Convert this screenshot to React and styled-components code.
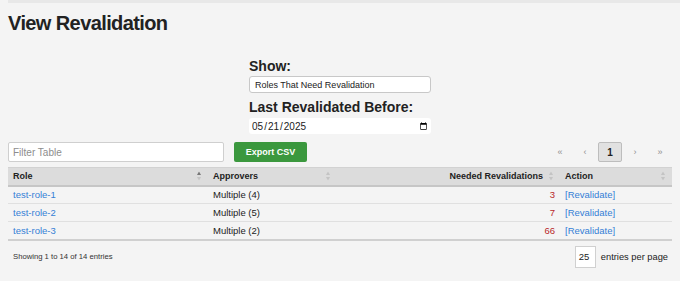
import React from "react";
import styled, { createGlobalStyle } from "styled-components";

const Global = createGlobalStyle`
  html, body { margin: 0; padding: 0; background: #f4f4f4; }
  body { font-family: "Liberation Sans", Arial, sans-serif; color: #222; }
  * { box-sizing: border-box; }
`;

const Page = styled.div`
  padding: 0 8px 20px 8px;
`;

const TopEdge = styled.div`
  height: 3px;
  margin-right: -8px;
  background: #e8e8e8;
`;

const Title = styled.h1`
  margin: 8px 0 0 0;
  font-size: 20px;
  line-height: 24px;
  font-weight: 700;
  letter-spacing: -0.6px;
  color: #222;
`;

const FormBlock = styled.div`
  width: 182px;
  margin: 23px auto 0 auto;
  display: flex;
  flex-direction: column;
`;

const Label = styled.label`
  font-size: 14px;
  line-height: 17px;
  font-weight: 700;
  color: #222;
  margin-top: ${(p) => (p.$first ? "0" : "6px")};
  margin-bottom: ${(p) => (p.$first ? "1px" : "2px")};
`;

const Select = styled.select`
  appearance: none;
  -webkit-appearance: none;
  height: 17px;
  width: 100%;
  background: #fff;
  border: 1px solid #c8c8c8;
  border-radius: 3px;
  padding: 0 0 0 5px;
  font-family: "Liberation Sans", Arial, sans-serif;
  font-size: 9px;
  color: #222;
  outline: none;
`;

const DateInput = styled.input`
  height: 16px;
  width: 100%;
  background: #fff;
  border: none;
  border-radius: 3px;
  padding: 0 3px 0 2px;
  font-family: "Liberation Sans", Arial, sans-serif;
  font-size: 10px;
  color: #222;
  outline: none;
  &::-webkit-calendar-picker-indicator {
    margin: 0;
    padding: 0;
    width: 9px;
    height: 9px;
  }
`;

const Toolbar = styled.div`
  display: flex;
  align-items: center;
  margin-top: 8px;
  height: 20px;
`;

const FilterInput = styled.input`
  width: 216px;
  height: 20px;
  background: #fff;
  border: 1px solid #cfcfcf;
  border-radius: 2px;
  padding: 0 4px;
  font-family: "Liberation Sans", Arial, sans-serif;
  font-size: 10px;
  color: #222;
  outline: none;
  &::placeholder { color: #8d8d8d; }
`;

const GreenButton = styled.button`
  margin-left: 10px;
  width: 73px;
  height: 20px;
  background: #3b983e;
  border: none;
  border-radius: 2px;
  color: #fff;
  font-family: "Liberation Sans", Arial, sans-serif;
  font-weight: 700;
  font-size: 9px;
  padding: 0;
`;

const Pager = styled.div`
  margin-left: auto;
  display: flex;
  gap: 1px;
  align-items: center;
`;

const PageGlyph = styled.span`
  width: 24px;
  height: 20px;
  display: flex;
  align-items: center;
  justify-content: center;
  font-size: 9px;
  color: #8f8f8f;
`;

const PageCurrent = styled.span`
  width: 24px;
  height: 20px;
  display: flex;
  align-items: center;
  justify-content: center;
  background: #e1e1e1;
  border: 1px solid #bdbdbd;
  border-radius: 2px;
  font-size: 10px;
  font-weight: 700;
  color: #222;
`;

const Table = styled.table`
  margin-top: 5px;
  width: 664px;
  border-collapse: collapse;
  table-layout: fixed;
`;

const HeadCell = styled.th`
  position: relative;
  height: 18px;
  padding: 0 ${(p) => (p.$right ? "17px" : "5px")} 0 5px;
  background: #dcdcdc;
  border-top: 1px solid #d2d2d2;
  border-bottom: 2px solid #c6c6c6;
  text-align: ${(p) => (p.$right ? "right" : "left")};
  font-size: 9px;
  font-weight: 700;
  color: #222;
  white-space: nowrap;
`;

const SortIconWrap = styled.span`
  position: absolute;
  right: 7px;
  top: 50%;
  transform: translateY(-50%);
  display: flex;
`;

const Cell = styled.td`
  height: 18px;
  padding: 0 5px;
  border-bottom: ${(p) => (p.$last ? "2px solid #d0d0d0" : "1px solid #e0e0e0")};
  text-align: ${(p) => (p.$right ? "right" : "left")};
  font-size: 9.5px;
  color: #222;
  white-space: nowrap;
`;

const RoleLink = styled.a`
  color: #3580d6;
  text-decoration: none;
`;

const Count = styled.span`
  color: #b8282a;
`;

const Footer = styled.div`
  display: flex;
  align-items: center;
  margin-top: 5px;
`;

const Info = styled.span`
  padding-left: 5px;
  font-size: 7.7px;
  color: #333;
`;

const PerPage = styled.div`
  margin-left: auto;
  margin-right: 4px;
  display: flex;
  align-items: center;
  gap: 5px;
  font-size: 9.3px;
  color: #222;
`;

const PerPageBox = styled.span`
  width: 21px;
  height: 22px;
  display: flex;
  align-items: center;
  padding-left: 3px;
  background: #fff;
  border: 1px solid #d0d0d0;
  font-size: 9.5px;
  color: #222;
`;

const SortIcon = ({ active }) => (
  <SortIconWrap>
    <svg width="4" height="9" viewBox="0 0 4 9">
      <polygon points="2,0 4,3.5 0,3.5" fill={active ? "#777" : "#c4c4c4"} />
      <polygon points="0,5.5 4,5.5 2,9" fill="#c4c4c4" />
    </svg>
  </SortIconWrap>
);

const rows = [
  { role: "test-role-1", approvers: "Multiple (4)", needed: 3 },
  { role: "test-role-2", approvers: "Multiple (5)", needed: 7 },
  { role: "test-role-3", approvers: "Multiple (2)", needed: 66 },
];

export default function App() {
  return (
    <>
      <Global />
      <Page>
        <TopEdge />
        <Title>View Revalidation</Title>
        <FormBlock>
          <Label $first>Show:</Label>
          <Select defaultValue="need">
            <option value="need">Roles That Need Revalidation</option>
          </Select>
          <Label>Last Revalidated Before:</Label>
          <DateInput type="date" defaultValue="2025-05-21" />
        </FormBlock>
        <Toolbar>
          <FilterInput placeholder="Filter Table" />
          <GreenButton>Export CSV</GreenButton>
          <Pager>
            <PageGlyph>«</PageGlyph>
            <PageGlyph>‹</PageGlyph>
            <PageCurrent>1</PageCurrent>
            <PageGlyph>›</PageGlyph>
            <PageGlyph>»</PageGlyph>
          </Pager>
        </Toolbar>
        <Table>
          <colgroup>
            <col style={{ width: 200 }} />
            <col style={{ width: 129 }} />
            <col style={{ width: 223 }} />
            <col style={{ width: 112 }} />
          </colgroup>
          <thead>
            <tr>
              <HeadCell>Role<SortIcon active /></HeadCell>
              <HeadCell>Approvers<SortIcon /></HeadCell>
              <HeadCell $right>Needed Revalidations<SortIcon /></HeadCell>
              <HeadCell>Action<SortIcon /></HeadCell>
            </tr>
          </thead>
          <tbody>
            {rows.map((r, i) => {
              const last = i === rows.length - 1;
              return (
                <tr key={r.role}>
                  <Cell $last={last}><RoleLink href="#">{r.role}</RoleLink></Cell>
                  <Cell $last={last}>{r.approvers}</Cell>
                  <Cell $last={last} $right><Count>{r.needed}</Count></Cell>
                  <Cell $last={last}><RoleLink href="#">[Revalidate]</RoleLink></Cell>
                </tr>
              );
            })}
          </tbody>
        </Table>
        <Footer>
          <Info>Showing 1 to 14 of 14 entries</Info>
          <PerPage>
            <PerPageBox>25</PerPageBox>
            <span>entries per page</span>
          </PerPage>
        </Footer>
      </Page>
    </>
  );
}
